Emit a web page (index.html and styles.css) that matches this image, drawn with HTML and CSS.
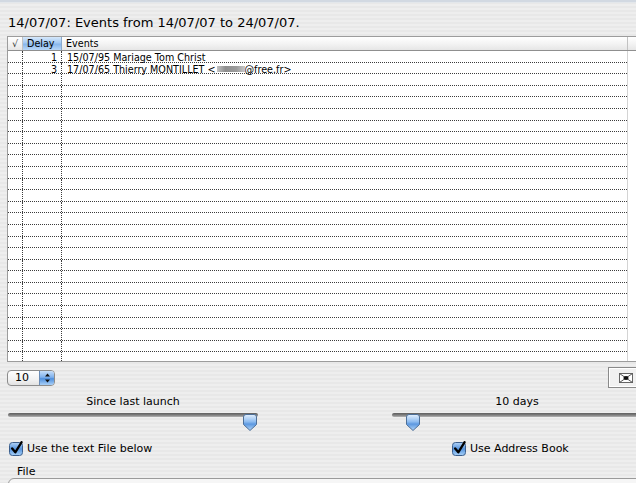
FILE: index.html
```html
<!DOCTYPE html>
<html>
<head>
<meta charset="utf-8">
<link rel="stylesheet" href="styles.css">
</head>
<body>
<div class="topbar"></div>
<h1 class="title">14/07/07: Events from 14/07/07 to 24/07/07.</h1>
<div class="table">
  <div class="thead">
    <div class="th th-check">√</div>
    <div class="th th-delay">Delay</div>
    <div class="th th-events">Events</div>
    <div class="th th-corner"></div>
  </div>
  <div class="tbody">
    <div class="rows">
      <div class="row"><div class="cell c-check"></div><div class="cell c-delay">1</div><div class="cell c-events">15/07/95 Mariage Tom Christ</div></div>
      <div class="row"><div class="cell c-check"></div><div class="cell c-delay">3</div><div class="cell c-events">17/07/65 Thierry MONTILLET &lt;<span class="blur"></span>@free.fr&gt;</div></div>
      <div class="row"><div class="cell c-check"></div><div class="cell c-delay"></div><div class="cell c-events"></div></div>
      <div class="row"><div class="cell c-check"></div><div class="cell c-delay"></div><div class="cell c-events"></div></div>
      <div class="row"><div class="cell c-check"></div><div class="cell c-delay"></div><div class="cell c-events"></div></div>
      <div class="row"><div class="cell c-check"></div><div class="cell c-delay"></div><div class="cell c-events"></div></div>
      <div class="row"><div class="cell c-check"></div><div class="cell c-delay"></div><div class="cell c-events"></div></div>
      <div class="row"><div class="cell c-check"></div><div class="cell c-delay"></div><div class="cell c-events"></div></div>
      <div class="row"><div class="cell c-check"></div><div class="cell c-delay"></div><div class="cell c-events"></div></div>
      <div class="row"><div class="cell c-check"></div><div class="cell c-delay"></div><div class="cell c-events"></div></div>
      <div class="row"><div class="cell c-check"></div><div class="cell c-delay"></div><div class="cell c-events"></div></div>
      <div class="row"><div class="cell c-check"></div><div class="cell c-delay"></div><div class="cell c-events"></div></div>
      <div class="row"><div class="cell c-check"></div><div class="cell c-delay"></div><div class="cell c-events"></div></div>
      <div class="row"><div class="cell c-check"></div><div class="cell c-delay"></div><div class="cell c-events"></div></div>
      <div class="row"><div class="cell c-check"></div><div class="cell c-delay"></div><div class="cell c-events"></div></div>
      <div class="row"><div class="cell c-check"></div><div class="cell c-delay"></div><div class="cell c-events"></div></div>
      <div class="row"><div class="cell c-check"></div><div class="cell c-delay"></div><div class="cell c-events"></div></div>
      <div class="row"><div class="cell c-check"></div><div class="cell c-delay"></div><div class="cell c-events"></div></div>
      <div class="row"><div class="cell c-check"></div><div class="cell c-delay"></div><div class="cell c-events"></div></div>
      <div class="row"><div class="cell c-check"></div><div class="cell c-delay"></div><div class="cell c-events"></div></div>
      <div class="row"><div class="cell c-check"></div><div class="cell c-delay"></div><div class="cell c-events"></div></div>
      <div class="row"><div class="cell c-check"></div><div class="cell c-delay"></div><div class="cell c-events"></div></div>
      <div class="row"><div class="cell c-check"></div><div class="cell c-delay"></div><div class="cell c-events"></div></div>
      <div class="row"><div class="cell c-check"></div><div class="cell c-delay"></div><div class="cell c-events"></div></div>
      <div class="row"><div class="cell c-check"></div><div class="cell c-delay"></div><div class="cell c-events"></div></div>
      <div class="row"><div class="cell c-check"></div><div class="cell c-delay"></div><div class="cell c-events"></div></div>
      <div class="row"><div class="cell c-check"></div><div class="cell c-delay"></div><div class="cell c-events"></div></div>
      <div class="row"><div class="cell c-check"></div><div class="cell c-delay"></div><div class="cell c-events"></div></div>
    </div>
    <div class="filler"></div>
  </div>
</div>

<div class="controls">
  <div class="popup">
    <div class="popup-value">10</div>
    <div class="popup-arrows">
      <svg width="13" height="14" viewBox="0 0 13 14"><path d="M6.5 2.5 L9 5.5 H4 Z" fill="#111"/><path d="M6.5 11.5 L9 8.5 H4 Z" fill="#111"/></svg>
    </div>
  </div>
  <div class="mailbtn">
    <svg width="14" height="10" viewBox="0 0 14 10"><rect x="0.5" y="0.5" width="13" height="9" fill="#fff" stroke="#666"/><path d="M0.5 0.5 L7 5 L13.5 0.5 M0.5 9.5 L7 5 L13.5 9.5" stroke="#555" fill="none"/><ellipse cx="7" cy="5" rx="2.6" ry="2" fill="#111"/></svg>
  </div>
</div>

<div class="sliders">
  <div class="slider-group">
    <div class="slider-label">Since last launch</div>
    <div class="slider">
      <div class="track"></div>
      <svg class="thumb" style="left: calc((100% - 16px) * 1)" width="16" height="19" viewBox="0 0 16 19"><defs><linearGradient id="th1" x1="0" y1="0" x2="0" y2="1"><stop offset="0" stop-color="#e4f0fd"/><stop offset="0.45" stop-color="#8ebcf0"/><stop offset="0.6" stop-color="#5c98e0"/><stop offset="1" stop-color="#b3d6f9"/></linearGradient></defs><path d="M1.5 4 Q1.5 1.5 4 1.5 H12 Q14.5 1.5 14.5 4 V11.5 L8 17.5 L1.5 11.5 Z" fill="url(#th1)" stroke="#4d6f98"/></svg>
    </div>
  </div>
  <div class="slider-group">
    <div class="slider-label">10 days</div>
    <div class="slider">
      <div class="track"></div>
      <svg class="thumb" style="left: calc((100% - 16px) * 0.055)" width="16" height="19" viewBox="0 0 16 19"><defs><linearGradient id="th2" x1="0" y1="0" x2="0" y2="1"><stop offset="0" stop-color="#e4f0fd"/><stop offset="0.45" stop-color="#8ebcf0"/><stop offset="0.6" stop-color="#5c98e0"/><stop offset="1" stop-color="#b3d6f9"/></linearGradient></defs><path d="M1.5 4 Q1.5 1.5 4 1.5 H12 Q14.5 1.5 14.5 4 V11.5 L8 17.5 L1.5 11.5 Z" fill="url(#th2)" stroke="#4d6f98"/></svg>
    </div>
  </div>
</div>

<div class="checks">
  <label class="check">
    <svg width="15" height="15" viewBox="0 0 15 15"><defs><linearGradient id="cb1" x1="0" y1="0" x2="0" y2="1"><stop offset="0" stop-color="#b2d3f7"/><stop offset="0.5" stop-color="#5593dd"/><stop offset="1" stop-color="#a8d1f8"/></linearGradient></defs><rect x="0.5" y="1.5" width="13" height="13" rx="3" fill="url(#cb1)" stroke="#3b5e8c"/><path d="M3.2 7.5 L6.3 11.3 L12.6 1.2" stroke="#000" stroke-width="2.3" fill="none" stroke-linecap="round" stroke-linejoin="round"/></svg>
    <span>Use the text File below</span>
  </label>
  <label class="check">
    <svg width="15" height="15" viewBox="0 0 15 15"><defs><linearGradient id="cb2" x1="0" y1="0" x2="0" y2="1"><stop offset="0" stop-color="#b2d3f7"/><stop offset="0.5" stop-color="#5593dd"/><stop offset="1" stop-color="#a8d1f8"/></linearGradient></defs><rect x="0.5" y="1.5" width="13" height="13" rx="3" fill="url(#cb2)" stroke="#3b5e8c"/><path d="M3.2 7.5 L6.3 11.3 L12.6 1.2" stroke="#000" stroke-width="2.3" fill="none" stroke-linecap="round" stroke-linejoin="round"/></svg>
    <span>Use Address Book</span>
  </label>
</div>

<div class="file-label">File</div>
<div class="file-field"></div>
</body>
</html>
```

FILE: styles.css
```css
html, body {
  margin: 0;
  padding: 0;
  width: 636px;
  height: 483px;
  overflow: hidden;
}

body {
  font-family: "DejaVu Sans", "Liberation Sans", sans-serif;
  color: #000;
  background: repeating-linear-gradient(to bottom, #eeeeee 0, #eeeeee 2px, #e8e8e8 2px, #e8e8e8 4px);
}

.topbar {
  height: 2px;
  background: #d2d9e2;
  border-bottom: 1px solid #e3e7eb;
}

.title {
  margin: 12px 0 6px 8px;
  font-size: 13px;
  font-weight: normal;
  line-height: 15px;
}

.table {
  margin-left: 7px;
  width: 638px;
  border: 1px solid #9c9c9c;
  background: #fff;
}

.thead {
  display: grid;
  grid-template-columns: 15px 39px 566px 1fr;
  height: 14px;
  box-sizing: border-box;
  border-bottom: 1px solid #8f8f8f;
  background: linear-gradient(#ffffff, #f4f4f4 50%, #e6e6e6);
}

.th {
  font-size: 9.6px;
  line-height: 13px;
  padding-left: 4px;
  border-right: 1px solid #c2c2c2;
  white-space: nowrap;
  overflow: hidden;
}

.th-check {
  padding-left: 4px;
  color: #333;
}

.th-delay {
  background: linear-gradient(#d6e8fb, #a3c9f2 45%, #88b7ec 55%, #b8d7f7);
  border-right-color: #8aa9cc;
}

.th-corner {
  border-right: none;
}

.tbody {
  display: grid;
  grid-template-columns: 619px 1fr;
  height: 310px;
  overflow: hidden;
}

.rows {
  display: flex;
  flex-direction: column;
}

.row {
  display: grid;
  grid-template-columns: 15px 39px 1fr;
  height: 11.6px;
  flex: none;
  box-sizing: border-box;
  border-bottom: 1px dotted #3c3c3c;
}

.cell {
  font-size: 9.6px;
  line-height: 11px;
  padding-top: 1px;
  white-space: nowrap;
  border-right: 1px dotted #3c3c3c;
}

.c-delay {
  text-align: right;
  padding-right: 4px;
}

.c-events {
  border-right: none;
  padding-left: 5px;
}

.blur {
  display: inline-block;
  width: 28px;
  height: 6px;
  margin: 0 0 1px 1px;
  vertical-align: middle;
  background: linear-gradient(to right, #c4c4c4, #8e8e8e 30%, #9c9c9c 70%, #c8c8c8);
  filter: blur(0.7px);
}

.filler {
  border-left: 1px solid #d4d4d4;
}

.controls {
  display: flex;
  justify-content: space-between;
  align-items: center;
  height: 21px;
  margin-top: 5px;
  padding-left: 7px;
}

.popup {
  width: 48px;
  height: 16px;
  box-sizing: border-box;
  border: 1px solid #8c8c8c;
  border-radius: 4px;
  display: flex;
  overflow: hidden;
  background: linear-gradient(#ffffff, #f2f2f2 60%, #e2e2e2);
}

.popup-value {
  flex: 1;
  font-size: 11px;
  line-height: 14px;
  padding-left: 7px;
}

.popup-arrows {
  width: 14px;
  display: flex;
  align-items: center;
  justify-content: center;
  border-left: 1px solid #6b8cb6;
  background: linear-gradient(#c6def9, #7eb0ec 45%, #4f8fdc 55%, #a9d0f8);
}

.mailbtn {
  width: 34px;
  height: 21px;
  margin-right: -6px;
  box-sizing: border-box;
  border: 1px solid #8a8a8a;
  box-shadow: inset 0 0 0 1px #ffffff;
  background: #f1f1f1;
  display: flex;
  align-items: center;
  padding-left: 10px;
}

.sliders {
  display: grid;
  grid-template-columns: 250px 250px;
  column-gap: 134px;
  padding-left: 8px;
  margin-top: 7px;
}

.slider-label {
  font-size: 11px;
  line-height: 13px;
  text-align: center;
}

.slider {
  position: relative;
  height: 18px;
  margin-top: 2px;
}

.track {
  margin-top: 5px;
  height: 4px;
  border-radius: 2px;
  background: linear-gradient(#5e5e5e, #7c7c7c 50%, #b4b4b4);
}

.thumb {
  position: absolute;
  top: 0;
}

.checks {
  display: grid;
  grid-template-columns: 443px auto;
  margin-top: 10px;
  padding-left: 9px;
}

.check {
  display: flex;
  align-items: center;
  gap: 3px;
  font-size: 11px;
  line-height: 15px;
}

.check svg {
  display: block;
}

.file-label {
  margin-top: 9px;
  padding-left: 17px;
  font-size: 11px;
  line-height: 13px;
}

.file-field {
  margin-left: 8px;
  margin-right: -8px;
  height: 20px;
  border: 1px solid #9a9a9a;
  border-radius: 6px;
  background: #f6f6f6;
}
```
